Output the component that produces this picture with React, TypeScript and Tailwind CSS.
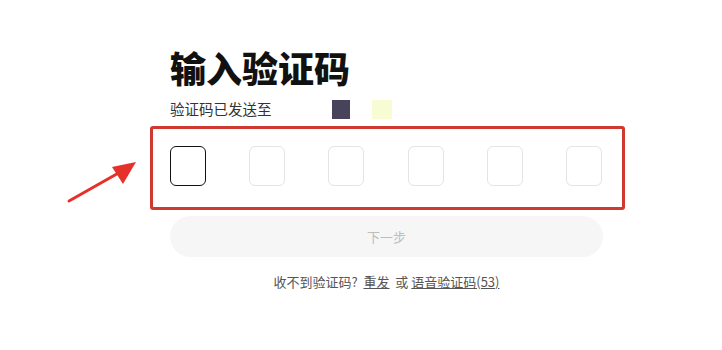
import React from 'react';

const font = { fontFamily: '"Noto Sans CJK SC", "Noto Sans", sans-serif' };

export default function App() {
  const cells = [0, 1, 2, 3, 4, 5];
  return (
    <div className="relative w-[722px] h-[350px] bg-white overflow-hidden" style={font}>
      {/* annotation arrow */}
      <svg className="absolute left-[66px] top-[158px]" width="76" height="46" viewBox="0 0 76 46">
        <path d="M3 43 L56 13" stroke="#e53129" strokeWidth="3" strokeLinecap="round" />
        <polygon points="70,4 46,9 57,26" fill="#e53129" />
      </svg>

      <div className="w-[475px] ml-[150px] pt-[47px]">
        <div className="pl-5">
          <h1 className="text-[36px] leading-[40px] font-black text-[#111]">输入验证码</h1>
          <div className="mt-3 flex items-center h-5">
            <span className="text-[14.5px] leading-5 text-[#333]">验证码已发送至</span>
            <span className="ml-[60px] w-[18px] h-[19px] bg-[#46435a]" />
            <span className="ml-[22px] w-[20px] h-[19px] bg-[#f8fcd2]" />
          </div>
        </div>

        <div className="mt-[7px] border-[3px] border-[#cf3a30] rounded-[3px] pl-[17px] pr-[20px] pt-[17px] pb-[21px]">
          <div className="flex justify-between">
            {cells.map((i) => (
              <div
                key={i}
                className={`w-[36px] h-[40px] rounded-[6px] border ${
                  i === 0 ? 'border-[#111]' : 'border-[#e4e4e4]'
                }`}
              />
            ))}
          </div>
        </div>

        <div className="pl-5 pr-[22px]">
          <button className="mt-[6px] w-full h-[41px] rounded-full bg-[#f6f6f6] text-[13px] text-[#bdbdbd]">
            下一步
          </button>
          <p className="mt-[15px] text-center text-[13px] leading-5 text-[#555]">
            收不到验证码?&nbsp;&nbsp;<span className="underline">重发</span>&nbsp;&nbsp;或&nbsp;
            <span className="underline">语音验证码(53)</span>
          </p>
        </div>
      </div>
    </div>
  );
}
